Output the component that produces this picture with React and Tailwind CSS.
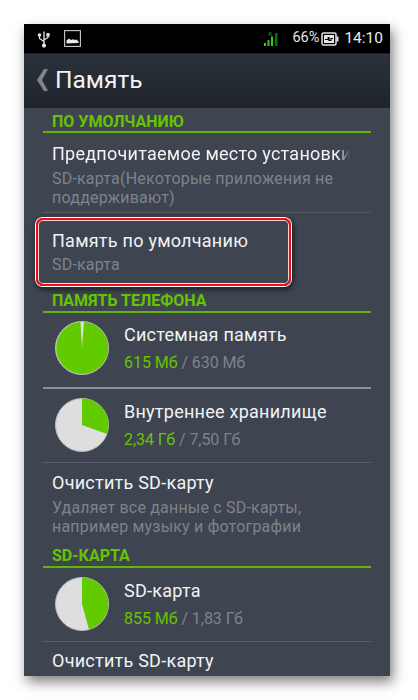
import React from "react";

const Pie = ({ d }) => (
  <svg width="54" height="54" viewBox="0 0 54 54" className="shrink-0">
    <circle cx="27" cy="27" r="26.5" fill="#dedede" stroke="#b9bcc0" strokeWidth="1" />
    <path d={d} fill="#62cb00" />
  </svg>
);

const Section = ({ children, className = "" }) => (
  <div className={`mx-[19px] border-b-2 border-[#5cb800] pl-[9px] text-[16px] leading-[18px] font-bold text-[#66c400] ${className}`}>
    {children}
  </div>
);

const Title = ({ children, className = "" }) => (
  <div className={`text-[18px] leading-[22px] tracking-[0.25px] whitespace-nowrap text-[#f2f3f4] ${className}`}>{children}</div>
);

const Sub = ({ children, className = "" }) => (
  <div className={`text-[16px] leading-[19px] tracking-[0.2px] text-[#7d838c] ${className}`}>{children}</div>
);

const StorageRow = ({ title, used, total, d, border = "border-[#59606b]", className = "" }) => (
  <div className={`mx-[19px] flex items-start border-b ${border} pl-3 ${className}`}>
    <Pie d={d} />
    <div className="ml-[15px] flex flex-col pt-[3px]">
      <Title>{title}</Title>
      <div className="mt-[5px] text-[16px] leading-[23px] tracking-[-0.05px] text-[#7d838c]">
        <span className="text-[#66c400]">{used}</span> / {total}
      </div>
    </div>
  </div>
);

export default function App() {
  return (
    <div className="h-[700px] w-[418px] overflow-hidden bg-white pt-6 pl-6 font-['Roboto',sans-serif]">
      <div className="h-[652px] w-[366px] overflow-hidden bg-[#3e4551] shadow-[3px_6px_12px_rgba(0,0,0,0.5)]">
        <div className="flex h-[29px] items-center bg-black pr-[7px] pl-[13px]">
          <svg width="14" height="18" viewBox="0 0 14 18" fill="none" stroke="#e8e8e8" strokeWidth="1.3">
            <path d="M7 1.5V15.5M7 11.5 2.5 8.5V6M7 10l4-2.5V5.5" />
            <circle cx="7" cy="15.6" r="1.4" fill="#e8e8e8" />
            <circle cx="2.5" cy="5" r="1.1" fill="#e8e8e8" />
            <rect x="10" y="3.8" width="2" height="2" fill="#e8e8e8" />
          </svg>
          <svg width="17" height="17" viewBox="0 0 17 17" className="ml-[13px]">
            <rect x="0.6" y="0.6" width="15.8" height="15.8" fill="#000" stroke="#c9c9c9" strokeWidth="1.1" />
            <path d="M2.5 13.5V10.5L5 8.5l2 1.5 2-.8 2 .8 1.5-.5 2 2v1.5z" fill="#e8e8e8" />
          </svg>
          <svg width="14" height="16" viewBox="0 0 14 16" className="mr-[14px] ml-auto">
            <rect x="0" y="12" width="2" height="3" fill="#2fd10f" />
            <rect x="3.5" y="9" width="2" height="6" fill="#2fd10f" />
            <rect x="7" y="5.5" width="2" height="9.5" fill="#2fd10f" />
            <rect x="11" y="2" width="2.5" height="13" fill="#146b10" />
            <text x="4.5" y="5" fontSize="5.5" fill="#2f9a1f" fontFamily="Roboto">R</text>
          </svg>
          <span className="text-[14.5px] leading-none text-[#e4e4e4]">66%</span>
          <svg width="18" height="14" viewBox="0 0 18 14" className="ml-[2px]">
            <rect x="1" y="1" width="14" height="12" rx="1.5" fill="none" stroke="#e4e4e4" strokeWidth="1.5" />
            <rect x="15.5" y="4.5" width="2" height="5" fill="#e4e4e4" />
            <rect x="3" y="3" width="10" height="8" fill="#e4e4e4" />
            <path d="M4 7.5h3.2V5.5h0.8v3h2V6.5H12" fill="none" stroke="#000" strokeWidth="1.2" />
          </svg>
          <span className="ml-[5px] text-[15.5px] leading-none text-[#ececec]">14:10</span>
        </div>

        <div className="flex h-[55px] items-center border-t border-[#1e2229] bg-gradient-to-b from-[#2c323b] to-[#1f242b] pb-[2px] pl-[13px]">
          <svg width="11" height="22" viewBox="0 0 11 22">
            <path d="M7 0h4L5 11l6 11H7L0 11z" fill="#80858c" />
          </svg>
          <span className="ml-[7px] text-[24.5px] leading-none text-[#f2f3f4]">Память</span>
        </div>

        <Section className="pt-[5px]">ПО УМОЛЧАНИЮ</Section>

        <div className="mx-[19px] border-b border-[#565c66] pt-[10px] pb-[5px] pl-[9px]">
          <Title className="overflow-hidden [mask-image:linear-gradient(to_right,black_285px,transparent_298px)]">
            Предпочитаемое место установки
          </Title>
          <Sub className="mt-[4px] w-[300px]">SD-карта(Некоторые приложения не поддерживают)</Sub>
        </div>

        <div className="relative mx-[19px] h-[79px] pt-[17px] pl-[9px]">
          <div className="absolute top-[5px] -left-[7px] h-[68px] w-[255px] rounded-[7px] border-[2px] border-[#f50a14] shadow-[0_0_0_1px_#fff,inset_0_0_0_1px_#f3d6d6,1px_2px_5px_2px_rgba(0,0,0,0.5)]" />
          <Title>Память по умолчанию</Title>
          <Sub className="mt-[3px]">SD-карта</Sub>
        </div>

        <Section className="pb-[1px]">ПАМЯТЬ ТЕЛЕФОНА</Section>

        <StorageRow
          className="border-b-2 pt-[8px] pb-[12px]"
          border="border-[#8a9099]"
          title="Системная память"
          used="615 Мб"
          total="630 Мб"
          d="M27 27 L25.5 1 A26 26 0 1 0 29 1 Z"
        />
        <StorageRow
          className="pt-[9px] pb-[10px]"
          title="Внутреннее хранилище"
          used="2,34 Гб"
          total="7,50 Гб"
          d="M27 27 V0.5 A26.5 26.5 0 0 1 52 36 Z"
        />

        <div className="mx-[19px] pt-[9px] pb-[11px] pl-[9px]">
          <Title>Очистить SD-карту</Title>
          <Sub className="mt-[4px]">
            Удаляет все данные с SD-карты,
            <br />
            например музыку и фотографии
          </Sub>
        </div>

        <Section className="pb-[1px]">SD-КАРТА</Section>

        <StorageRow
          className="pt-[9px] pb-[10px]"
          title="SD-карта"
          used="855 Мб"
          total="1,83 Гб"
          d="M27 27 V0.5 A26.5 26.5 0 0 1 34 52.5 Z"
        />

        <div className="mx-[19px] pt-[8px] pl-[9px]">
          <Title>Очистить SD-карту</Title>
        </div>
      </div>
    </div>
  );
}
